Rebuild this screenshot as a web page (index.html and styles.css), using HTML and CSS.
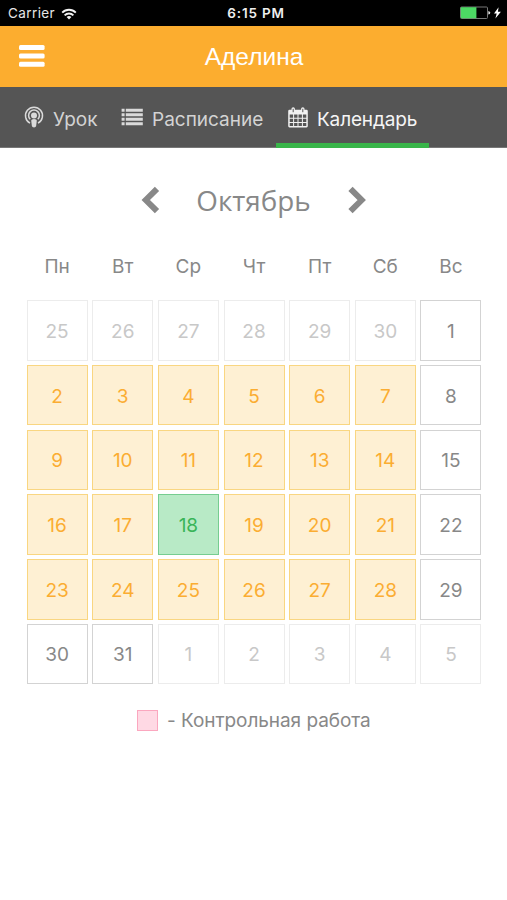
FILE: index.html
```html
<!DOCTYPE html>
<html lang="ru">
<head>
<meta charset="utf-8">
<title>Календарь</title>
<link rel="stylesheet" href="styles.css">
</head>
<body>
<div class="status">
  <div class="carrier"><span>Carrier</span>
    <svg width="16" height="12" viewBox="0 0 16 12" fill="none" stroke="#f2f2f2" stroke-width="1.9"><path d="M1.2 4.6a9.6 9.6 0 0 1 13.6 0M3.6 7.3a6.2 6.2 0 0 1 8.8 0"/><path d="M8 11.6 5.6 9.1a3.4 3.4 0 0 1 4.8 0z" fill="#f2f2f2" stroke="none"/></svg>
  </div>
  <div class="time">6:15 PM</div>
  <div class="battery">
    <svg width="42" height="14" viewBox="0 0 42 14"><rect x=".5" y="1" width="27" height="11.5" rx="1" fill="none" stroke="#777"/><rect x=".8" y="1.2" width="15.6" height="11.1" fill="#4cd964"/><path d="M28.3 5v3.6q2-.4 2-1.8t-2-1.800" fill="#ddd"/><path d="M38.600 1.200 34 7.500h2.700l-1.300 5 5.500-6.700h-3z" fill="#fff"/></svg>
  </div>
</div>
<header class="header">
  <svg class="menu" width="26" height="22" viewBox="0 0 26 22" fill="#fff"><rect width="25.6" height="5" rx="1.5"/><rect y="8.4" width="25.6" height="5" rx="1.5"/><rect y="16.8" width="25.6" height="5" rx="1.5"/></svg>
  <h1 class="title">Аделина</h1>
</header>
<nav class="tabs">
  <a class="tab tab-lesson">
    <svg width="20" height="22" viewBox="0 0 20 22" fill="none" stroke="#dadada"><path d="M6 17.200a8.500 8.500 0 1 1 8 0" stroke-width="1.500"/><path d="M6.200 13.300a5.400 5.400 0 1 1 7.600 0" stroke-width="1.500"/><circle cx="10" cy="9.400" r="3" fill="#dadada" stroke="none"/><path d="M7.200 14.500q0-1.500 2.800-1.500t2.800 1.500l-.7 5.600q-.2 1.400-2.100 1.400t-2.100-1.400z" fill="#dadada" stroke="none"/></svg>
    <span>Урок</span>
  </a>
  <a class="tab tab-schedule">
    <svg width="22" height="18" viewBox="0 0 22 18" fill="#dadada"><path d="M.6.700h3v3h-3zM.6 5.200h3v3h-3zM.6 9.700h3v3h-3zM.6 14.200h3v3h-3zM4.800.700h17v3h-17zM4.800 5.200h17v3h-17zM4.800 9.700h17v3h-17zM4.800 14.200h17v3h-17z"/></svg>
    <span>Расписание</span>
  </a>
  <a class="tab tab-calendar">
    <svg width="20" height="21" viewBox="0 0 20 21"><path fill="#f1f1f1" fill-rule="evenodd" d="M1.500 2.800h2V1.700Q3.500.2 5.200.2t1.700 1.500v1.100h6.200V1.700q0-1.500 1.700-1.500t1.700 1.500v1.100h2q1.300 0 1.300 1.400v14.900q0 1.400-1.300 1.400h-17Q.2 20.500.2 19.100V4.200Q.2 2.800 1.500 2.800zM1.700 7.600v3.200h3.400V7.600zM6.100 7.600v3.200h3.400V7.600zM10.500 7.600v3.200h3.400V7.600zM14.900 7.600v3.200h3.400V7.600zM1.700 11.800v3.200h3.400v-3.200zM6.100 11.800v3.200h3.400v-3.200zM10.500 11.800v3.200h3.400v-3.200zM14.900 11.800v3.200h3.400v-3.200zM1.700 16v3h3.400v-3zM6.100 16v3h3.400v-3zM10.500 16v3h3.400v-3zM14.900 16v3h3.400v-3z"/><path stroke="#555" stroke-width="1" d="M5.200 1.800v3.400M14.800 1.800v3.400"/></svg>
    <span>Календарь</span>
  </a>
</nav>
<main class="calendar">
  <div class="month">
    <svg width="20" height="28" viewBox="0 0 20 28" fill="none" stroke="#888" stroke-width="6"><path d="M17 2.800 5.800 14 17 25.200"/></svg>
    <h2 class="month-name">Октябрь</h2>
    <svg width="20" height="28" viewBox="0 0 20 28" fill="none" stroke="#888" stroke-width="6"><path d="M3.500 2.800 14.700 14 3.500 25.200"/></svg>
  </div>
  <div class="weekdays"><span>Пн</span><span>Вт</span><span>Ср</span><span>Чт</span><span>Пт</span><span>Сб</span><span>Вс</span></div>
  <div class="days">
    <span class="day other">25</span><span class="day other">26</span><span class="day other">27</span><span class="day other">28</span><span class="day other">29</span><span class="day other">30</span><span class="day">1</span>
    <span class="day school">2</span><span class="day school">3</span><span class="day school">4</span><span class="day school">5</span><span class="day school">6</span><span class="day school">7</span><span class="day">8</span>
    <span class="day school">9</span><span class="day school">10</span><span class="day school">11</span><span class="day school">12</span><span class="day school">13</span><span class="day school">14</span><span class="day">15</span>
    <span class="day school">16</span><span class="day school">17</span><span class="day today">18</span><span class="day school">19</span><span class="day school">20</span><span class="day school">21</span><span class="day">22</span>
    <span class="day school">23</span><span class="day school">24</span><span class="day school">25</span><span class="day school">26</span><span class="day school">27</span><span class="day school">28</span><span class="day">29</span>
    <span class="day">30</span><span class="day">31</span><span class="day other">1</span><span class="day other">2</span><span class="day other">3</span><span class="day other">4</span><span class="day other">5</span>
  </div>
  <div class="legend"><i class="swatch"></i><span>- Контрольная работа</span></div>
</main>
</body>
</html>
```
FILE: styles.css
```css
* { box-sizing: border-box; }
body { margin: 0; background: #fff; font-family: Inter, Roboto, sans-serif; color: #888; }
svg { display: block; flex: none; }
h1, h2 { margin: 0; font-weight: 400; }
.status { height: 25.500px; background: #000; color: #e6e6e6; display: grid; grid-template-columns: 1fr auto 1fr; align-items: center; padding: 0 5px 0 8px; font-size: 13.500px; line-height: 27px; }
.carrier { display: flex; align-items: center; gap: 6px; letter-spacing: .4px; }
.time { font-weight: 600; font-size: 13.500px; letter-spacing: .8px; padding-left: 2px; color: #eee; }
.battery { display: flex; justify-content: flex-end; margin-top: -1px; }
.header { height: 61px; background: #fcad2f; color: #fff; display: grid; grid-template-columns: 26px 1fr 26px; align-items: center; padding: 0 18px 0 19px; }
.menu { margin-top: -1px; }
.title { font: 400 24.500px/60px "Liberation Sans", sans-serif; text-align: center; padding-top: 1px; }
.tabs { height: 61px; background: #555; color: #d3d3d3; display: flex; font-size: 19px; line-height: 65px; border-bottom: 1px solid #777; }
.tab { display: flex; height: 61px; white-space: nowrap; }
.tab svg { margin-top: 20px; }
.tab-lesson { margin-left: 24px; gap: 9px; width: 97px; }
.tab-lesson svg { margin-top: 19px; }
.tab-schedule { gap: 9px; width: 155px; }
.tab-schedule svg { margin-top: 21px; }
.tab-calendar { width: 153px; padding-left: 12px; gap: 9px; color: #f5f5f5; border-bottom: 5px solid #39b54a; letter-spacing: -.15px; }
.month { display: flex; align-items: center; justify-content: center; height: 104.500px; gap: 36px; }
.month-name { font: 400 27.800px/40px "Open Sans", "Noto Sans", sans-serif; }
.weekdays, .days { display: grid; grid-template-columns: repeat(7, 61px); column-gap: 4.650px; margin-left: 26.600px; text-align: center; }
.weekdays { font-size: 19px; line-height: 30px; height: 48.200px; }
.days { grid-auto-rows: 60.600px; row-gap: 4.100px; font-size: 19px; }
.day { border: 1.500px solid #d3d3d3; display: flex; align-items: center; justify-content: center; padding-top: 2px; }
.other { border-color: #ececec; color: #c8c8c8; }
.school { border-color: #f9d681; background: #fef0d3; color: #fbad32; }
.today { border-color: #76cd90; background: #b8eac6; color: #39b559; }
.legend { display: flex; align-items: center; margin: 21px 0 0 137px; height: 30px; gap: 9px; font-size: 19px; letter-spacing: -.06px; }
.legend span { padding-top: 1px; }
.swatch { width: 21px; height: 21px; background: #ffd9e4; border: 1.500px solid #fba7bf; }
```
